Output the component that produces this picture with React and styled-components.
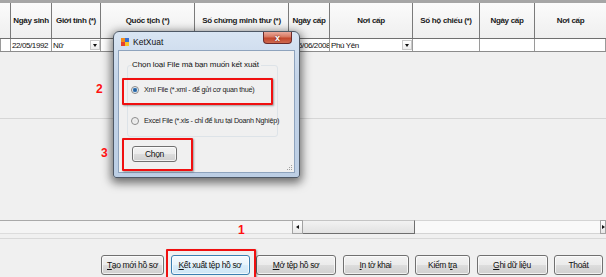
import React from 'react'
import styled, { createGlobalStyle } from 'styled-components'

const GlobalStyle = createGlobalStyle`
  html, body { margin: 0; padding: 0; background: #f0f0f0; }
  body { font-family: "Liberation Sans", Arial, sans-serif; }
`;

const sans = `"Liberation Sans", Arial, sans-serif`;

const Page = styled.div`
  position: relative;
  width: 606px;
  height: 277px;
  overflow: hidden;
  background: #f0f0f0;
  display: flex;
  flex-direction: column;
  font-family: ${sans};
  color: #111;
`;

const cols = '11px 41px 49px 94px 94px 41px 83px 67px 55px 71px';

const TopStrip = styled.div`
  height: 3px;
  background: #a6a6a6;
`;

const HeaderRow = styled.div`
  display: grid;
  grid-template-columns: ${cols};
  height: 35px;
  border-bottom: 1px solid #6f6f6f;
`;

const HeaderCell = styled.div`
  display: flex;
  align-items: center;
  justify-content: center;
  border-right: 1px solid #7a7a7a;
  background: linear-gradient(#fbfbfb, #efefef);
  font-size: 8px;
  font-weight: bold;
  letter-spacing: -0.3px;
  color: #1a1a1a;
  white-space: nowrap;
  &:last-child { border-right: none; }
`;

const DataRow = styled.div`
  display: grid;
  grid-template-columns: ${cols};
  height: 12px;
  border-bottom: 1px solid #8c8c8c;
  background: #fff;
`;

const DataCell = styled.div`
  position: relative;
  display: flex;
  align-items: center;
  padding-left: ${({ $pad }) => $pad ?? 1}px;
  border-right: 1px solid #9a9a9a;
  font-size: 8px;
  letter-spacing: -0.4px;
  white-space: nowrap;
  overflow: hidden;
  &:first-child { border-left: 1px solid #9a9a9a; }
`;

const ComboBtn = styled.div`
  margin-left: auto;
  width: 10px;
  height: 10px;
  border: 1px solid #c8c8c8;
  box-sizing: border-box;
  background: linear-gradient(#ffffff, #ececec);
  display: flex;
  align-items: center;
  justify-content: center;
  flex-shrink: 0;
  &::after {
    content: '';
    border-left: 2.5px solid transparent;
    border-right: 2.5px solid transparent;
    border-top: 3px solid #111;
  }
`;

const Body = styled.div`
  flex: 1;
  display: flex;
  flex-direction: column;
`;

const UpperArea = styled.div`
  height: 66px;
  border-bottom: 1px solid #d6d6d6;
`;

const ScrollRow = styled.div`
  display: flex;
  height: 14px;
  margin-top: auto;
`;

const ScrollLeftPane = styled.div`
  width: 292px;
  border-top: 1px solid #a9a9a9;
  border-bottom: 1px solid #dcdcdc;
  background: #f4f4f4;
  box-sizing: border-box;
`;

const ScrollArrow = styled.div`
  width: ${({ $w }) => $w}px;
  box-sizing: border-box;
  border: 1px solid #a2a2a2;
  background: linear-gradient(#ffffff, #e8e8e8);
  display: flex;
  align-items: center;
  justify-content: center;
  &::after {
    content: '';
    border-top: 2.5px solid transparent;
    border-bottom: 2.5px solid transparent;
    ${({ $dir }) => $dir === 'left'
      ? 'border-right: 3px solid #111;'
      : 'border-left: 3px solid #111;'}
  }
`;

const ScrollThumb = styled.div`
  width: 112px;
  box-sizing: border-box;
  border-top: 1px solid #c4c4c4;
  border-right: 1px solid #6e6e6e;
  border-bottom: 1px solid #6e6e6e;
  background: linear-gradient(#f2f2f2, #e2e2e2);
`;

const ScrollTrack = styled.div`
  flex: 1;
  box-sizing: border-box;
  border-top: 1px solid #d4d4d4;
  border-bottom: 1px solid #d4d4d4;
  background: #f9f9f9;
`;

const ButtonBar = styled.div`
  margin-top: 4px;
  height: 39px;
  box-sizing: border-box;
  border-top: 1px solid #d8d8d8;
  display: flex;
  justify-content: flex-end;
  align-items: flex-start;
  gap: 6.5px;
  padding: 16px 3px 0 0;
`;

const WinButton = styled.button`
  width: ${({ $w }) => $w}px;
  height: 20px;
  padding: 0;
  box-sizing: border-box;
  border-radius: 3px;
  border: 1px solid ${({ $active }) => ($active ? '#3c7fb1' : '#707070')};
  background: ${({ $active }) => ($active
    ? 'linear-gradient(#f4fafe 0%, #e8f4fb 50%, #d9edf9 51%, #cfe6f5 100%)'
    : 'linear-gradient(#f2f2f2 0%, #ebebeb 50%, #dddddd 51%, #cfcfcf 100%)')};
  box-shadow: inset 0 0 0 1px rgba(255,255,255,0.7);
  font-family: ${sans};
  font-size: 8.5px;
  letter-spacing: -0.35px;
  color: #111;
  white-space: nowrap;
  u { text-decoration: underline; }
`;

/* ---- dialog ---- */

const Window = styled.div`
  position: absolute;
  left: 113px;
  top: 31px;
  width: 187px;
  height: 147px;
  box-sizing: border-box;
  border: 1px solid #4e5865;
  border-radius: 6px 6px 3px 3px;
  background: linear-gradient(#d9e5f3 0%, #c5d5e9 30%, #bccee4 100%);
  box-shadow: 0 3px 10px 2px rgba(0,0,0,0.55);
  display: flex;
  flex-direction: column;
`;

const TitleBar = styled.div`
  height: 17px;
  display: flex;
  align-items: flex-start;
  padding-left: 7px;
`;

const TitleIcon = styled.svg`
  width: 8px;
  height: 8px;
  margin-top: 6px;
  flex-shrink: 0;
`;

const TitleText = styled.span`
  margin: 6px 0 0 4px;
  font-size: 8.5px;
  line-height: 9px;
  color: #111;
`;

const CloseBtn = styled.div`
  margin-left: auto;
  margin-right: 7px;
  width: 29px;
  height: 12px;
  box-sizing: border-box;
  border: 1px solid #6b2a2a;
  border-top: none;
  border-radius: 0 0 4px 4px;
  background: linear-gradient(#e9a99c 0%, #d7775f 45%, #c2462c 55%, #cf6a4f 100%);
  display: flex;
  align-items: center;
  justify-content: center;
  color: #fff;
  font-weight: bold;
  font-size: 9px;
  text-shadow: 0 0 2px #5a1a10;
`;

const Client = styled.div`
  flex: 1;
  margin: 1px 4px 4px 4px;
  border: 1px solid #8ea3bd;
  background: #f0f0f0;
  position: relative;
  padding: 14px 0 0 8px;
  display: flex;
  flex-direction: column;
  align-items: flex-start;
`;

const GroupBox = styled.div`
  position: relative;
  width: 151px;
  height: 72px;
  box-sizing: border-box;
  border: 1px solid #dde3e8;
  border-radius: 3px;
  display: flex;
  flex-direction: column;
  padding: 19px 0 0 3px;
  gap: 22px;
`;

const GroupLabel = styled.span`
  position: absolute;
  top: -6px;
  left: 4px;
  padding-right: 2px;
  background: #f0f0f0;
  font-size: 8px;
  line-height: 10px;
  letter-spacing: -0.1px;
  white-space: nowrap;
`;

const RadioRow = styled.label`
  display: flex;
  align-items: center;
  gap: 5px;
  font-size: 7.2px;
  letter-spacing: -0.25px;
  white-space: nowrap;
  color: #1a1a1a;
`;

const RadioDot = styled.span`
  width: 8px;
  height: 8px;
  box-sizing: border-box;
  border-radius: 50%;
  border: 1px solid #8a8a8a;
  background: ${({ $checked }) => ($checked
    ? 'radial-gradient(circle, #1d4f86 0%, #3f7fbd 45%, #e8eef4 60%)'
    : 'radial-gradient(circle, #e4e4e4 0%, #f7f7f7 80%)')};
  flex-shrink: 0;
`;

const SmallButton = styled(WinButton)`
  margin: 9px 0 0 5px;
  height: 16px;
  font-size: 8.5px;
`;

const Grip = styled.svg`
  position: absolute;
  right: 1px;
  bottom: 1px;
  width: 8px;
  height: 8px;
`;

/* ---- annotations ---- */

const RedBox = styled.div`
  position: absolute;
  left: ${({ $x }) => $x}px;
  top: ${({ $y }) => $y}px;
  width: ${({ $w }) => $w}px;
  height: ${({ $h }) => $h}px;
  box-sizing: border-box;
  border: 2px solid #f01010;
  border-radius: 1px;
  box-shadow: 1px 1px 2px rgba(0,0,0,0.35);
  pointer-events: none;
`;

const Marker = styled.span`
  position: absolute;
  left: ${({ $x }) => $x}px;
  top: ${({ $y }) => $y}px;
  font-weight: bold;
  font-size: 12px;
  line-height: 12px;
  color: #ff1010;
`;

const headers = ['', 'Ngày sinh', 'Giới tính (*)', 'Quốc tịch (*)', 'Số chứng minh thư (*)', 'Ngày cấp', 'Nơi cấp', 'Số hộ chiếu (*)', 'Ngày cấp', 'Nơi cấp'];

const buttons = [
  { w: 63, key: 'T', rest: 'ạo mới hồ sơ' },
  { w: 79, key: 'K', rest: 'ết xuất tệp hồ sơ', active: true },
  { w: 80, key: 'M', rest: 'ở tệp hồ sơ' },
  { w: 66, key: 'I', rest: 'n tờ khai' },
  { w: 55, pre: 'Kiểm t', key: 'r', rest: 'a' },
  { w: 71, key: 'G', rest: 'hi dữ liệu' },
  { w: 49, pre: 'Thoát', key: '', rest: '' },
]

const App = () => {
  return (
    <Page>
      <GlobalStyle />
      <TopStrip />
      <HeaderRow>
        {headers.map((h, i) => <HeaderCell key={i}>{h}</HeaderCell>)}
      </HeaderRow>
      <DataRow>
        <DataCell />
        <DataCell>22/05/1992</DataCell>
        <DataCell>Nữ<ComboBtn /></DataCell>
        <DataCell />
        <DataCell />
        <DataCell $pad={5}>25/06/2008</DataCell>
        <DataCell>Phú Yên<ComboBtn /></DataCell>
        <DataCell />
        <DataCell />
        <DataCell />
      </DataRow>

      <Body>
        <UpperArea />
        <ScrollRow>
          <ScrollLeftPane />
          <ScrollArrow $w={11} $dir="left" />
          <ScrollThumb />
          <ScrollTrack />
          <ScrollArrow $w={6} $dir="right" />
        </ScrollRow>
      </Body>

      <ButtonBar>
        {buttons.map((b, i) => (
          <WinButton key={i} $w={b.w} $active={b.active}>
            {b.pre}<u>{b.key}</u>{b.rest}
          </WinButton>
        ))}
      </ButtonBar>

      <Window>
        <TitleBar>
          <TitleIcon viewBox="0 0 8 8">
            <rect x="0" y="0" width="4" height="4" fill="#f28c1e" />
            <rect x="4" y="0" width="4" height="4" fill="#3a6fd0" />
            <rect x="0" y="4" width="4" height="4" fill="#e8412c" />
            <rect x="4" y="4" width="4" height="4" fill="#f7c52b" />
          </TitleIcon>
          <TitleText>KetXuat</TitleText>
          <CloseBtn>x</CloseBtn>
        </TitleBar>
        <Client>
          <GroupBox>
            <GroupLabel>Chọn loại File mà bạn muốn kết xuất</GroupLabel>
            <RadioRow><RadioDot $checked />Xml File (*.xml - để gửi cơ quan thuế)</RadioRow>
            <RadioRow><RadioDot />Excel File (*.xls - chỉ để lưu tại Doanh Nghiệp)</RadioRow>
          </GroupBox>
          <SmallButton $w={45}>Chọn</SmallButton>
          <Grip viewBox="0 0 8 8">
            {[[6, 2], [6, 4], [4, 4], [6, 6], [4, 6], [2, 6]].map(([x, y], i) => (
              <rect key={i} x={x} y={y} width="1" height="1" fill="#a0a0a0" />
            ))}
          </Grip>
        </Client>
      </Window>

      <RedBox $x={122} $y={78} $w={151} $h={27} />
      <RedBox $x={122} $y={138} $w={71} $h={33} />
      <RedBox $x={166} $y={249} $w={90} $h={32} />
      <Marker $x={96} $y={83}>2</Marker>
      <Marker $x={101} $y={147}>3</Marker>
      <Marker $x={238} $y={224}>1</Marker>
    </Page>
  )
}

export default App
